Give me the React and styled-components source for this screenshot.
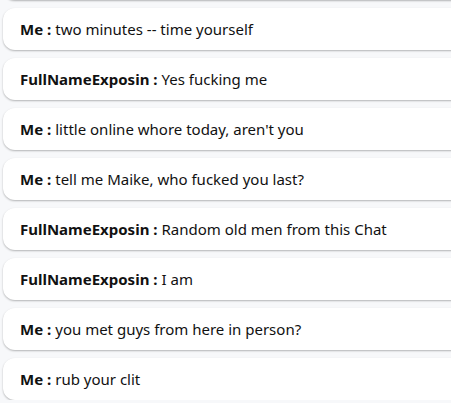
import React from 'react';
import styled, { createGlobalStyle } from 'styled-components';

const Global = createGlobalStyle`
  html, body {margin: 0; padding: 0; background: #f7f8fa;}
  body {font-family: "Noto Sans", "Open Sans", sans-serif; overflow: hidden;}
`

const Feed = styled.ul`
  list-style: none;
  margin: -42px -24px 0 3px;
  padding: 0;
  display: flex;
  flex-direction: column;
  gap: 8px;
`

const Bubble = styled.li`
  display: flex;
  align-items: center;
  height: 42px;
  box-sizing: border-box;
  padding: 0 0 0 17px;
  background: #fff;
  border-radius: 12px;
  box-shadow: 0 1px 2px rgba(0, 0, 0, 0.28);
  font-size: 15px;
  color: #111;
  white-space: nowrap;
`

const Who = styled.b`
  font-weight: 700;
  margin-right: 4px;
`

export default function App() {

    const messages = [
        {id: 1, from: 'Me', text: 'two minutes -- time yourself'},
        {id: 2, from: 'FullNameExposin', text: 'Yes fucking me'},
        {id: 3, from: 'Me', text: 'little online whore today, aren\'t you'},
        {id: 4, from: 'Me', text: 'tell me Maike, who fucked you last?'},
        {id: 5, from: 'FullNameExposin', text: 'Random old men from this Chat'},
        {id: 6, from: 'FullNameExposin', text: 'I am'},
        {id: 7, from: 'Me', text: 'you met guys from here in person?'},
        {id: 8, from: 'Me', text: 'rub your clit'}
    ];

    return (
        <>
        <Global/>
        <Feed>
            {/* previous message, scrolled out of view */}
            <Bubble/>
            {messages.map(m =>
                <Bubble key={m.id}>
                    <Who>{m.from} :</Who>{m.text}
                </Bubble>
            )}
        </Feed>
        </>
    );
}
